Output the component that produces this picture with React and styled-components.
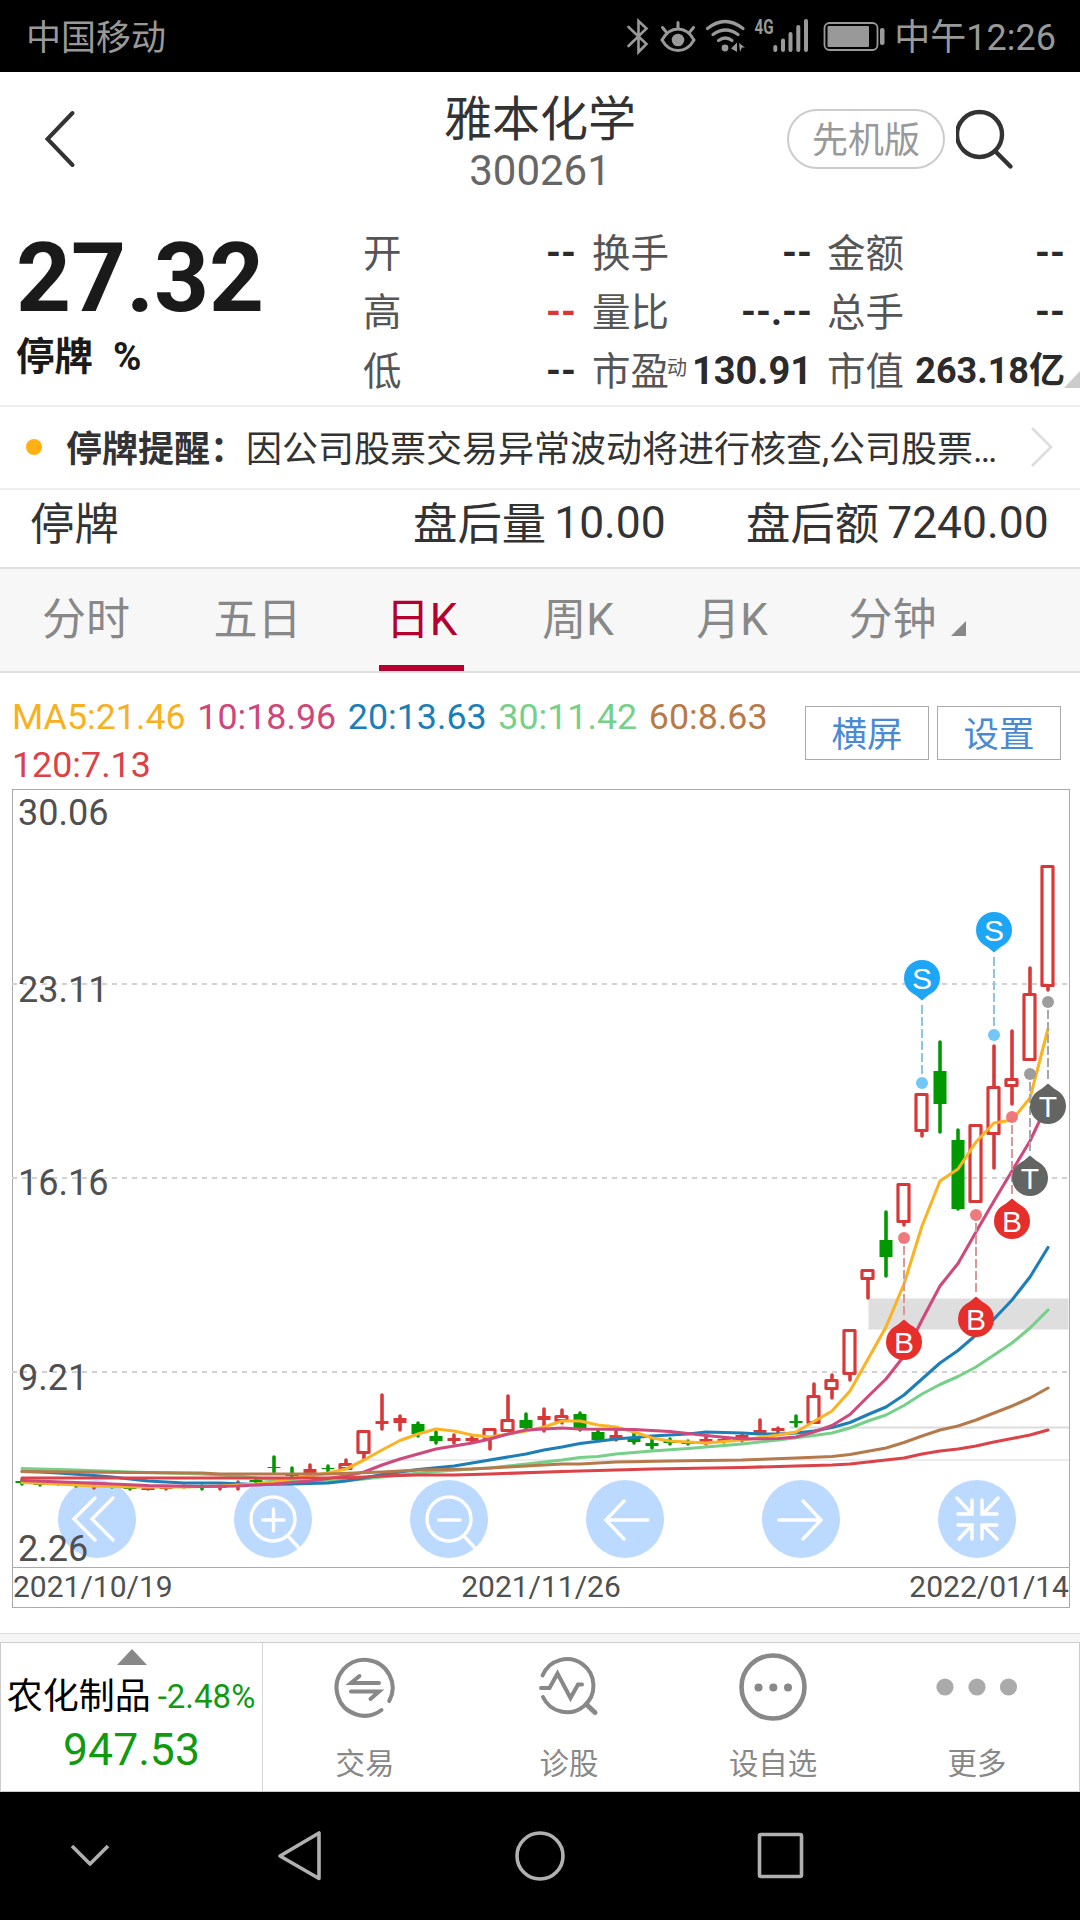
import styled, { createGlobalStyle } from "styled-components";

const GlobalStyle = createGlobalStyle`
  * {
    box-sizing: border-box;
  }
  body {
    margin: 0;
    background: #fff;
    font-family: Roboto, "Noto Sans CJK SC", sans-serif;
  }
`;

const Screen = styled.div`
  width: 1080px;
  height: 1920px;
  display: flex;
  flex-direction: column;
  overflow: hidden;
  background: #fff;
  color: #333;
  white-space: nowrap;
`;

/* status bar */
const StatusBar = styled.div`
  height: 72px;
  flex: none;
  display: flex;
  align-items: center;
  padding: 2px 24px 0 26px;
  background: #000;
  color: #999;
`;
const Carrier = styled.span`
  font-size: 35px;
  line-height: 48px;
  padding-top: 4px;
`;
const StatusIcons = styled.svg`
  width: 270px;
  height: 72px;
  margin: -2px 4px 0 auto;
  color: #999;
`;
const Clock = styled.span`
  font-size: 36px;
  line-height: 48px;
  padding-top: 2px;
`;

/* header */
const Header = styled.div`
  height: 152px;
  flex: none;
  display: grid;
  grid-template-columns: 340px 400px 340px;
`;
const BackButton = styled.svg`
  width: 60px;
  height: 70px;
  margin: 32px 0 0 30px;
`;
const TitleBlock = styled.div`
  display: flex;
  flex-direction: column;
  align-items: center;
  padding-top: 20px;
`;
const Name = styled.span`
  font-size: 48px;
  line-height: 56px;
`;
const Code = styled.span`
  font-size: 42px;
  line-height: 46px;
  color: #666;
`;
const HeaderTools = styled.div`
  display: flex;
  align-items: flex-start;
  padding: 37px 0 0 47px;
  gap: 11px;
`;
const Pill = styled.div`
  width: 158px;
  height: 60px;
  border: 2px solid #ccc;
  border-radius: 30px;
  color: #999;
  font-size: 36px;
  line-height: 60px;
  text-align: center;
`;
const SearchIcon = styled.svg`
  width: 60px;
  height: 64px;
`;

/* quote */
const Quote = styled.div`
  height: 181px;
  flex: none;
  display: flex;
`;
const PriceBlock = styled.div`
  width: 363px;
  padding: 3px 0 0 16px;
  color: #1a1a1a;
  font-weight: bold;
`;
const Price = styled.div`
  font-size: 96px;
  line-height: 103px;
`;
const PriceNote = styled.div`
  display: flex;
  gap: 20px;
  font-size: 38.5px;
  line-height: 53px;
`;
const StatColumn = styled.div`
  width: ${(p) => p.$width}px;
  margin-right: ${(p) => p.$gap || 0}px;
`;
const Stat = styled.div`
  height: 59px;
  display: flex;
  align-items: center;
  color: #555;
  font-size: 38.5px;
  line-height: 59px;
`;
const StatTag = styled.span`
  font-size: 20px;
  margin: -6px 0 0 -2px;
`;
const StatValue = styled.span`
  margin-left: auto;
  font-weight: bold;
  font-size: ${(p) => (p.$small ? 36 : 38)}px;
  color: ${(p) => (p.$up ? "#dc3535" : "#2b2b2b")};
`;
const Corner = styled.svg`
  width: 16px;
  height: 17px;
  align-self: flex-end;
  margin: 0 0 17px -1px;
`;

/* notice */
const Notice = styled.div`
  height: 85px;
  flex: none;
  display: flex;
  align-items: center;
  padding: 0 25px 0 26px;
  border-top: 2px solid #efefef;
  border-bottom: 2px solid #efefef;
  font-size: 36px;
`;
const Dot = styled.i`
  width: 16px;
  height: 16px;
  margin: -2px 24px 0 0;
  border-radius: 50%;
  background: #ffb013;
`;
const NoticeText = styled.span`
  margin-top: -3px;
`;
const NoticeArrow = styled.svg`
  width: 26px;
  height: 46px;
  margin: -2px 0 0 auto;
`;

const AfterHours = styled.div`
  height: 77px;
  flex: none;
  display: grid;
  grid-template-columns: 383px 333px auto;
  padding: 0 0 12px 30px;
  align-items: center;
  font-size: 44.4px;
`;
const AfterLabel = styled.span`
  margin-top: -5px;
`;
const AfterItem = styled.div`
  display: flex;
  align-items: center;
  gap: 8px;
`;

/* period tabs */
const Tabs = styled.div`
  height: 106px;
  flex: none;
  display: flex;
  padding-left: 36px;
  gap: 74px;
  background: #f7f7f7;
  border-top: 2px solid #e0e0e0;
  border-bottom: 2px solid #e0e0e0;
`;
const Tab = styled.div`
  width: ${(p) => p.$width}px;
  height: 102px;
  display: flex;
  justify-content: center;
  line-height: 102px;
  font-size: 44px;
  color: ${(p) => (p.$active ? "#b4002f" : "#888")};
  border-bottom: 6px solid ${(p) => (p.$active ? "#b8002e" : "transparent")};
  border-radius: 3px 3px 0 0;
`;
const TabCorner = styled.svg`
  width: 15px;
  height: 15px;
  margin: 52px 0 0 14px;
`;

/* averages */
const Averages = styled.div`
  height: 116px;
  flex: none;
  display: flex;
  padding: 20px 19px 0 12px;
  justify-content: space-between;
`;
const AverageList = styled.div`
  width: 780px;
  display: flex;
  flex-wrap: wrap;
  align-content: flex-start;
  column-gap: 11.7px;
`;
const Average = styled.span`
  color: ${(p) => p.$color};
  font-size: 35.8px;
  line-height: 48px;
  height: 47.5px;
`;
const ChartButtons = styled.div`
  display: flex;
  gap: 8px;
  padding-top: 14px;
`;
const ChartButton = styled.div`
  width: 124px;
  height: 54px;
  margin-top: -1px;
  border: 1.5px solid #aaa;
  color: #4a8ad4;
  font-size: 35.5px;
  line-height: 57px;
  text-align: center;
`;

/* chart */
const Chart = styled.div`
  height: 779px;
  width: 1058px;
  flex: none;
  position: relative;
  margin-left: 12px;
  border: 1.5px solid #aaa;
`;
const Plot = styled.svg`
  position: absolute;
  left: -1px;
  top: -1px;
  width: 1058px;
  height: 779px;
  overflow: visible;
`;
const Controls = styled.div`
  position: absolute;
  left: 45px;
  top: 690px;
  display: flex;
  gap: 98px;
`;
const Control = styled.svg`
  width: 78px;
  height: 78px;
  border-radius: 50%;
  background: #bcdaff;
  fill: none;
  stroke: #fff;
  stroke-width: 3.4;
  stroke-linecap: round;
`;
const Dates = styled.div`
  height: 40px;
  width: 1058px;
  flex: none;
  display: flex;
  justify-content: space-between;
  margin-left: 12px;
  border: 1.5px solid #aaa;
  border-top: none;
  color: #505050;
  font-size: 30px;
  line-height: 38px;
`;

/* bottom bar */
const Band = styled.div`
  height: 9px;
  flex: none;
  margin-top: 25px;
  border-top: 1px solid #ddd;
  background: #f6f6f6;
`;
const BottomBar = styled.div`
  height: 150px;
  flex: none;
  display: flex;
  border: 1px solid #ccc;
`;
const Sector = styled.div`
  width: 262px;
  display: flex;
  flex-direction: column;
  align-items: center;
  border-right: 1px solid #d5d5d5;
  color: #109a10;
`;
const SectorArrow = styled.svg`
  width: 30px;
  height: 16px;
  margin-top: 6px;
`;
const SectorRow = styled.div`
  display: flex;
  align-items: center;
  gap: 7px;
  margin: 6px 1px 0 0;
  height: 50px;
  font-size: 33px;
`;
const SectorName = styled.span`
  color: #000;
  font-size: 36px;
  margin-top: -6px;
`;
const SectorValue = styled.div`
  font-size: 44.5px;
  line-height: 54px;
  margin-top: 2px;
`;
const Action = styled.div`
  flex: 1;
  display: flex;
  flex-direction: column;
  align-items: center;
  padding-top: 6px;
  color: #888;
  font-size: 29.4px;
  line-height: 40px;
`;
const ActionIcon = styled.svg`
  width: 90px;
  height: 76px;
  margin-bottom: 19px;
  fill: none;
  stroke: #888;
  stroke-width: 4;
  stroke-linecap: round;
`;

const NavBar = styled.svg`
  width: 1080px;
  height: 128px;
  flex: none;
  background: #000;
  fill: none;
  stroke: #b0b0b0;
  stroke-width: 3.6;
`;

const RED = "#d93838";
const GREEN = "#009a00";

const stats = [
  { width: 213, gap: 16, rows: [["开", "--"], ["高", "--", true], ["低", "--"]] },
  { width: 220, gap: 15, rows: [["换手", "--"], ["量比", "--.--"], ["市盈", "130.91", false, "动"]] },
  { width: 238, gap: 0, rows: [["金额", "--"], ["总手", "--"], ["市值", "263.18亿"]] },
];

const tabs = [
  { label: "分时", width: 100 },
  { label: "五日", width: 95 },
  { label: "日K", width: 85, active: true },
  { label: "周K", width: 80 },
  { label: "月K", width: 80 },
  { label: "分钟", width: 122, corner: true },
];

const averages = [
  ["MA5:21.46", "#f8b11c"],
  ["10:18.96", "#cf4678"],
  ["20:13.63", "#1a7eb8"],
  ["30:11.42", "#76d089"],
  ["60:8.63", "#b87a48"],
  ["120:7.13", "#db4145"],
];

// [up, high, bodyTop, bodyBottom, low], one per trading day, 18px apart
const candles = [
  [0, 1479, 1481, 1483, 1485], [0, 1482, 1483, 1485, 1486], [0, 1482, 1483, 1484, 1485], [0, 1483, 1484, 1486, 1487],
  [1, 1484, 1485, 1487, 1489], [0, 1484, 1486, 1487, 1488], [0, 1485, 1487, 1489, 1490], [1, 1486, 1487, 1490, 1490],
  [1, 1486, 1487, 1489, 1490], [1, 1485, 1486, 1488, 1488], [0, 1485, 1486, 1487, 1490], [1, 1485, 1486, 1488, 1490],
  [1, 1481, 1485, 1487, 1490], [0, 1478, 1480, 1482, 1484], [0, 1456, 1467, 1468, 1473], [0, 1467, 1474, 1476, 1477],
  [1, 1464, 1469, 1474, 1474], [0, 1465, 1468, 1469, 1472], [1, 1459, 1463, 1470, 1470], [1, 1430, 1430, 1454, 1460],
  [1, 1394, 1421, 1424, 1430], [1, 1415, 1418, 1423, 1431], [0, 1422, 1424, 1434, 1437], [0, 1431, 1436, 1441, 1444],
  [1, 1434, 1438, 1441, 1444], [1, 1435, 1438, 1441, 1443], [1, 1427, 1428, 1439, 1450], [1, 1395, 1419, 1432, 1432],
  [0, 1413, 1420, 1428, 1430], [1, 1408, 1416, 1420, 1432], [1, 1409, 1415, 1422, 1424], [0, 1412, 1414, 1428, 1431],
  [0, 1430, 1432, 1440, 1441], [1, 1429, 1435, 1439, 1441], [0, 1433, 1438, 1442, 1444], [0, 1438, 1443, 1446, 1449],
  [0, 1438, 1441, 1443, 1445], [0, 1440, 1442, 1444, 1445], [1, 1435, 1439, 1442, 1445], [1, 1437, 1439, 1442, 1443],
  [1, 1434, 1435, 1439, 1442], [1, 1419, 1430, 1433, 1434], [1, 1427, 1428, 1431, 1433], [0, 1415, 1421, 1423, 1427],
  [1, 1383, 1395, 1424, 1425], [1, 1374, 1379, 1390, 1399], [1, 1329, 1329, 1375, 1381], [1, 1269, 1269, 1280, 1299],
  [0, 1211, 1240, 1257, 1277], [1, 1183, 1183, 1223, 1226], [1, 1093, 1093, 1132, 1137], [0, 1041, 1071, 1104, 1133],
  [0, 1129, 1140, 1209, 1210], [1, 1124, 1124, 1203, 1203], [1, 1045, 1086, 1135, 1169], [1, 1030, 1078, 1087, 1105],
  [1, 967, 993, 1061, 1061], [1, 865, 865, 987, 991],
];

// each line is a list of [day, y]
const lines = [
  ["#76d089", [[0, 1468.5], [3, 1470], [6, 1472], [10, 1474], [12, 1476], [13, 1478], [14, 1480], [15, 1481], [17, 1481.5], [18, 1480.5], [19, 1479], [20, 1477], [21, 1475], [23, 1471.5], [25, 1469], [26, 1468], [28, 1464], [29, 1462], [30, 1460], [31, 1457.5], [32, 1456.5], [33, 1454], [35, 1451], [37, 1448.5], [40, 1444], [42, 1440], [44, 1435.5], [45, 1433], [46, 1428], [47, 1421], [48, 1415], [49, 1405.5], [50, 1394], [51, 1384.5], [52, 1376.5], [53, 1367], [54, 1355], [55, 1343], [56, 1328], [57, 1310]]],
  ["#1e7fb8", [[0, 1471.5], [1, 1472], [2, 1473], [4, 1475.5], [5, 1477], [7, 1481], [8, 1482], [9, 1483], [11, 1483], [13, 1484.5], [15, 1484], [17, 1483], [18, 1481], [19, 1478], [20, 1474.5], [21, 1472], [22, 1469.5], [24, 1466], [25, 1463], [28, 1454], [29, 1450], [30, 1447], [31, 1443.5], [33, 1439], [35, 1436], [37, 1434], [38, 1432], [40, 1433], [41, 1434], [42, 1434], [43, 1433], [44, 1431], [45, 1427.5], [46, 1422.5], [47, 1414.5], [48, 1407], [49, 1395], [50, 1379], [51, 1363], [52, 1350.5], [53, 1335], [54, 1319], [55, 1300], [56, 1277], [57, 1247.5]]],
  ["#f8b424", [[0, 1482.5], [2, 1484], [4, 1486], [6, 1487], [9, 1487], [11, 1486], [13, 1484], [14, 1482], [15, 1478.5], [16, 1476], [17, 1473], [18, 1469], [19, 1460], [20, 1450], [21, 1440.5], [22, 1434], [23, 1429], [24, 1431], [25, 1435], [26, 1437], [27, 1434], [28, 1431], [29, 1427], [30, 1421], [31, 1421], [32, 1425], [33, 1427], [34, 1432], [35, 1438], [36, 1441], [38, 1443], [40, 1440], [42, 1435], [43, 1432], [44, 1421.5], [45, 1411], [46, 1391], [47, 1359], [48, 1327], [49, 1284], [50, 1226], [51, 1181], [52, 1169], [53, 1142], [54, 1123], [55, 1120], [56, 1098], [57, 1029]]],
  ["#cf4a7c", [[0, 1480.5], [3, 1482.5], [7, 1485.5], [10, 1486.5], [12, 1486], [14, 1484], [16, 1481], [18, 1476], [19, 1472], [20, 1465], [21, 1459], [22, 1454], [23, 1449], [24, 1446], [25, 1443], [26, 1439], [27, 1434], [28, 1430], [30, 1428], [31, 1429], [34, 1429.5], [36, 1431.5], [38, 1435.5], [40, 1439], [42, 1438.5], [43, 1437], [44, 1432], [45, 1425.5], [46, 1414.5], [47, 1396.5], [48, 1379], [49, 1356], [50, 1320], [51, 1286], [52, 1263.5], [53, 1232], [54, 1201], [55, 1171], [56, 1141], [57, 1103]]],
  ["#b47a4c", [[0, 1471.5], [6, 1472.5], [10, 1473], [11, 1474], [17, 1474], [20, 1472], [22, 1470], [25, 1469], [27, 1467], [30, 1464], [31, 1464], [33, 1462], [36, 1461], [40, 1460], [43, 1458], [45, 1456.5], [46, 1454.5], [48, 1448], [49, 1442.5], [50, 1436], [51, 1430], [52, 1426], [53, 1420], [54, 1413], [55, 1406], [56, 1398], [57, 1388]]],
  ["#db4348", [[0, 1478], [18, 1478], [20, 1476], [22, 1475], [24, 1475], [26, 1474], [30, 1471.5], [35, 1469], [40, 1467.5], [43, 1466], [45, 1465], [46, 1464], [48, 1460], [49, 1458], [50, 1454], [51, 1451], [52, 1449], [53, 1446], [54, 1442], [55, 1438.5], [56, 1435], [57, 1430]]],
];

const marks = [
  { t: "S", x: 922, y: 978, dot: 1083 },
  { t: "S", x: 994, y: 930, dot: 1035 },
  { t: "B", x: 904, y: 1342, dot: 1238 },
  { t: "B", x: 976, y: 1319, dot: 1215 },
  { t: "B", x: 1012, y: 1221, dot: 1117 },
  { t: "T", x: 1030, y: 1178, dot: 1074 },
  { t: "T", x: 1048, y: 1106, dot: 1002 },
];
const markColors = {
  S: ["#1ca6f5", "#6cc3f8", "#8cc6e0"],
  B: ["#e62e2b", "#ee7377", "#d89a98"],
  T: ["#636563", "#98989a", "#a8a8a8"],
};

const dayX = (day) => 22 + day * 18;

const Candle = ({ x, data: [up, high, top, bottom, low] }) => {
  const color = up ? RED : GREEN;
  const hollow = up && bottom - top > 5;
  return (
    <g stroke={color} strokeWidth="3.6" strokeLinecap="round">
      {hollow ? (
        <>
          {top - high > 1 && <path d={`M${x} ${high + 1}V${top + 1}`} />}
          {low - bottom > 1 && <path d={`M${x} ${bottom - 1}V${low - 1}`} />}
          <rect x={x - 6} y={top + 1.5} width="11" height={bottom - top - 3} fill="none" strokeWidth="3.2" strokeLinejoin="round" />
        </>
      ) : (
        <>
          <path d={`M${x} ${high + 1}V${low - 1}`} />
          <rect x={x - 6.5} y={top} width="13" height={bottom - top} fill={color} stroke="none" />
        </>
      )}
    </g>
  );
};

const Mark = ({ t, x, y, dot }) => {
  const [fill, soft, dash] = markColors[t];
  const dir = t === "S" ? 1 : -1;
  return (
    <g>
      <path d={`M${x} ${y + dir * 27}V${dot - dir * 8}`} stroke={dash} strokeWidth="2" strokeDasharray="9 3" />
      <circle cx={x} cy={dot} r="6" fill={soft} opacity="0.95" />
      <circle cx={x} cy={y} r="18" fill={fill} />
      <path d={`M${x - 9} ${y + dir * 15}L${x} ${y + dir * 22.5}L${x + 9} ${y + dir * 15}z`} fill={fill} />
      <text x={x} y={y + 10.5} fontSize="30" fontFamily="Liberation Sans, sans-serif" fill="#fff" textAnchor="middle">
        {t}
      </text>
    </g>
  );
};

const App = () => {
  return (
    <Screen>
      <GlobalStyle />
      <StatusBar>
        <Carrier>中国移动</Carrier>
        <StatusIcons viewBox="620 0 270 72" fill="none" stroke="currentColor" strokeWidth="3" strokeLinecap="round">
          <path d="M628.5 27L646.5 44L638.5 52V21L646.5 28.5L628.5 46" strokeWidth="2.6" />
          <path d="M662 40Q668 29 678 29T694 40Q688 50.500 678 50.500T662 40z" />
          <path d="M678 22.500V28M662.500 27.500L667 33M693.500 27.500L689 33" />
          <circle cx="678" cy="40" r="6.3" fill="currentColor" stroke="none" />
          <path d="M707.500 28.500Q725 14.500 743 28.500M713 34.500Q725.500 25.500 738 34.500M718.500 40.500Q725.500 35.500 732 40.500" strokeWidth="3.2" />
          <circle cx="725" cy="48" r="3.4" fill="currentColor" stroke="none" />
          <path d="M731 48.500L737 42.500V52zM739 43L745 47.500H742L740 52z" fill="currentColor" stroke="none" />
          <text x="754.500" y="34" fontSize="20" fontWeight="bold" textLength="19" lengthAdjust="spacingAndGlyphs" fill="currentColor" stroke="none">4G</text>
          <path d="M775.300 47V50M783 40.500V50M790.500 34V50M798.300 27V50M806 21V50" strokeWidth="4" />
          <rect x="824.500" y="23" width="53" height="27" rx="5" strokeWidth="1.8" />
          <rect x="827.500" y="26" width="41.500" height="21" rx="1" fill="currentColor" stroke="none" />
          <rect x="880" y="28" width="4.500" height="17" rx="2" fill="currentColor" stroke="none" />
        </StatusIcons>
        <Clock>中午12:26</Clock>
      </StatusBar>

      <Header>
        <BackButton viewBox="30 104 60 70" fill="none" stroke="#333" strokeWidth="4" strokeLinecap="round">
          <path d="M72.500 113L47.500 139L72.500 165" />
        </BackButton>
        <TitleBlock>
          <Name>雅本化学</Name>
          <Code>300261</Code>
        </TitleBlock>
        <HeaderTools>
          <Pill>先机版</Pill>
          <SearchIcon viewBox="956 109 60 64" fill="none" stroke="#333" strokeWidth="4.4" strokeLinecap="round">
            <circle cx="979.500" cy="134.500" r="22.500" />
            <path d="M996 152L1010.500 166.500" />
          </SearchIcon>
        </HeaderTools>
      </Header>

      <Quote>
        <PriceBlock>
          <Price>27.32</Price>
          <PriceNote>
            <span>停牌</span>
            <span>%</span>
          </PriceNote>
        </PriceBlock>
        {stats.map((col) => (
          <StatColumn key={col.width} $width={col.width} $gap={col.gap}>
            {col.rows.map(([label, value, up, tag]) => (
              <Stat key={label}>
                {label}
                {tag && <StatTag>{tag}</StatTag>}
                <StatValue $up={up} $small={value.length > 6}>{value}</StatValue>
              </Stat>
            ))}
          </StatColumn>
        ))}
        <Corner viewBox="0 0 16 17">
          <path d="M16 0V17H0z" fill="#ccc" />
        </Corner>
      </Quote>

      <Notice>
        <Dot />
        <NoticeText>
          <b>停牌提醒：</b>因公司股票交易异常波动将进行核查,公司股票…
        </NoticeText>
        <NoticeArrow viewBox="0 0 26 46" fill="none" stroke="#ddd" strokeWidth="2.600">
          <path d="M3 4L22 23L3 42" />
        </NoticeArrow>
      </Notice>

      <AfterHours>
        <AfterLabel>停牌</AfterLabel>
        <AfterItem><AfterLabel>盘后量</AfterLabel><span>10.00</span></AfterItem>
        <AfterItem><AfterLabel>盘后额</AfterLabel><span>7240.00</span></AfterItem>
      </AfterHours>

      <Tabs>
        {tabs.map((tab) => (
          <Tab key={tab.label} $width={tab.width} $active={tab.active}>
            {tab.label}
            {tab.corner && (
              <TabCorner viewBox="0 0 15 15">
                <path d="M15 0V15H0z" fill="#888" />
              </TabCorner>
            )}
          </Tab>
        ))}
      </Tabs>

      <Averages>
        <AverageList>
          {averages.map(([text, color]) => (
            <Average key={text} $color={color}>{text}</Average>
          ))}
        </AverageList>
        <ChartButtons>
          <ChartButton>横屏</ChartButton>
          <ChartButton>设置</ChartButton>
        </ChartButtons>
      </Averages>

      <Chart>
        <Controls>
          <Control viewBox="58 1480 78 78"><path d="M95 1498L74 1519L95 1540M113 1498L92 1519L113 1540" /></Control>
          <Control viewBox="234 1480 78 78">
            <circle cx="273" cy="1519" r="22" />
            <path d="M263 1520H284M273.500 1509V1531M288 1536L298 1547" />
          </Control>
          <Control viewBox="410 1480 78 78">
            <circle cx="449" cy="1519" r="22" />
            <path d="M439 1520H460M464 1536L474 1547" />
          </Control>
          <Control viewBox="586 1480 78 78"><path d="M624 1501L606 1520L624 1539M607 1520H648" /></Control>
          <Control viewBox="762 1480 78 78"><path d="M803 1501L821 1520L803 1539M820 1520H779" /></Control>
          <Control viewBox="938 1480 78 78">
            <path d="M957 1498L972 1514M972 1500V1514H958M998 1498L983 1514M982 1500V1514H997M959 1539L972 1525M972 1539V1525H958M997 1539L983 1525M982 1539V1525H997" />
          </Control>
        </Controls>
        <Plot viewBox="12 789 1058 779">
          <rect x="868.500" y="1298.500" width="200" height="31" fill="#dedede" />
          <path d="M364 1460H1069" stroke="#ececec" strokeWidth="2" />
          <path d="M790 1427.500H1069" stroke="#dcdcdc" strokeWidth="2" />
          <path d="M12 984H1069M12 1178H1069M12 1372H1069" stroke="#d2d2d2" strokeWidth="2" strokeDasharray="5 5" />
          {candles.map((data, i) => (
            <Candle key={i} x={dayX(i)} data={data} />
          ))}
          {lines.map(([color, points]) => (
            <polyline
              key={color}
              points={points.map(([day, y]) => `${dayX(day)},${y}`).join(" ")}
              fill="none"
              stroke={color}
              strokeWidth="3.1"
              strokeLinecap="round"
              strokeLinejoin="round"
            />
          ))}
          {marks.map((mark) => (
            <Mark key={mark.x} {...mark} />
          ))}
          <g fontSize="36" fill="#505050">
            <text x="18" y="825">30.06</text>
            <text x="18" y="1002">23.11</text>
            <text x="18" y="1194.500">16.16</text>
            <text x="18" y="1390">9.21</text>
            <text x="18" y="1561">2.26</text>
          </g>
        </Plot>
      </Chart>
      <Dates>
        <span>2021/10/19</span>
        <span>2021/11/26</span>
        <span>2022/01/14</span>
      </Dates>

      <Band />
      <BottomBar>
        <Sector>
          <SectorArrow viewBox="0 0 30 16"><path d="M15 0L30 16H0z" fill="#888" /></SectorArrow>
          <SectorRow>
            <SectorName>农化制品</SectorName>
            <span>-2.48%</span>
          </SectorRow>
          <SectorValue>947.53</SectorValue>
        </Sector>
        <Action>
          <ActionIcon viewBox="320 1649 90 76">
            <path d="M389.200 1701A28 28 0 1 0 381.500 1710" />
            <path d="M359.500 1676L351 1683H379M351 1691.500H379L370.500 1699" />
          </ActionIcon>
          交易
        </Action>
        <Action>
          <ActionIcon viewBox="524 1649 90 76">
            <path d="M542.500 1675.500A26.500 26.500 0 1 1 543 1697" />
            <path d="M541 1688H549.500L557.500 1673.500L570.500 1698L578 1684.500H582" />
            <path d="M587 1705L595 1712.500" strokeWidth="5" />
          </ActionIcon>
          诊股
        </Action>
        <Action>
          <ActionIcon viewBox="727 1649 90 76">
            <circle cx="772" cy="1687" r="31.500" strokeWidth="4.600" />
            <g fill="#888" stroke="none">
              <circle cx="757.500" cy="1687.500" r="4" />
              <circle cx="772.300" cy="1687.500" r="4" />
              <circle cx="787" cy="1687.500" r="4" />
            </g>
          </ActionIcon>
          设自选
        </Action>
        <Action>
          <ActionIcon viewBox="932 1649 90 76">
            <g fill="#aaa" stroke="none">
              <circle cx="945" cy="1687" r="8.600" />
              <circle cx="977" cy="1687" r="8.600" />
              <circle cx="1008.500" cy="1687" r="8.600" />
            </g>
          </ActionIcon>
          更多
        </Action>
      </BottomBar>

      <NavBar viewBox="0 1792 1080 128" strokeLinejoin="round">
        <path d="M72 1846L90 1864L108 1846" />
        <path d="M319 1833V1878.500L280 1856z" />
        <circle cx="540" cy="1856" r="23" />
        <rect x="759.500" y="1834.500" width="42" height="42" rx="1.500" />
      </NavBar>
    </Screen>
  );
};

export default App;
